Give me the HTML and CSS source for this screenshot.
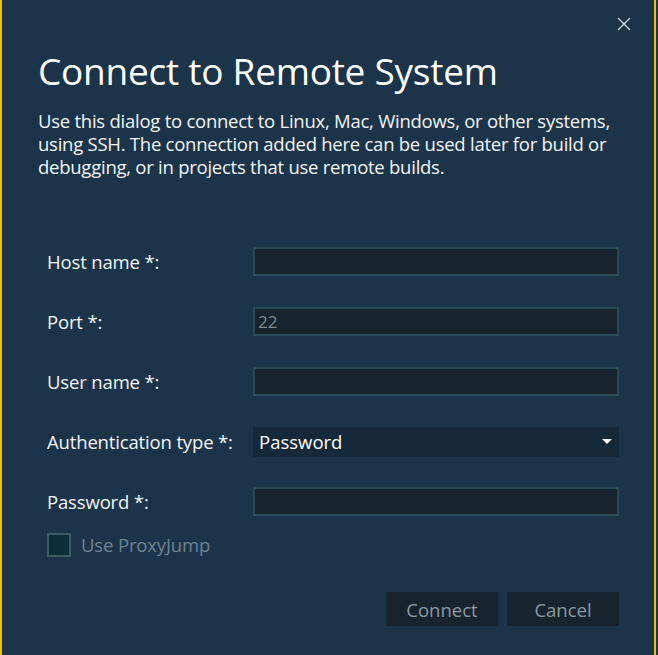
FILE: index.html
```html
<!DOCTYPE html>
<html>
<head>
<meta charset="utf-8">
<link rel="stylesheet" href="styles.css">
</head>
<body>
<div class="dialog">
  <div class="topbar">
    <button class="close" aria-label="Close">
      <svg width="14" height="14" viewBox="0 0 14 14"><path d="M1 1 L13 13 M13 1 L1 13" stroke="#d8dee3" stroke-width="1.3" fill="none"/></svg>
    </button>
  </div>
  <h1 class="title">Connect to Remote System</h1>
  <p class="desc">Use this dialog to connect to Linux, Mac, Windows, or other systems, using SSH. The connection added here can be used later for build or debugging, or in projects that use remote builds.</p>
  <div class="form">
    <label class="label">Host name *:</label>
    <div class="input"></div>
    <label class="label">Port *:</label>
    <div class="input"><span class="placeholder">22</span></div>
    <label class="label">User name *:</label>
    <div class="input"></div>
    <label class="label">Authentication type *:</label>
    <div class="select"><span>Password</span>
      <svg width="10" height="6" viewBox="0 0 10 6"><path d="M0 0 H10 L5 5 Z" fill="#ffffff"/></svg>
    </div>
    <label class="label">Password *:</label>
    <div class="input"></div>
  </div>
  <div class="check-row">
    <span class="checkbox"></span>
    <span class="check-label">Use ProxyJump</span>
  </div>
  <div class="buttons">
    <button class="btn">Connect</button>
    <button class="btn">Cancel</button>
  </div>
</div>
</body>
</html>
```

FILE: styles.css
```css
html, body {
  margin: 0;
  padding: 0;
  background: #1b3449;
}
.dialog {
  box-sizing: border-box;
  width: 656px;
  height: 655px;
  background: #1b3449;
  border-left: 2px solid #f5c000;
  border-right: 2px solid #f5c000;
  font-family: "Open Sans", "Noto Sans", sans-serif;
  color: #ffffff;
  padding: 0 0 0 36px;
  display: flex;
  flex-direction: column;
}
.topbar {
  display: flex;
  justify-content: flex-end;
  height: 47px;
  padding-right: 23px;
}
.close {
  background: none;
  border: none;
  padding: 0;
  margin-top: 17px;
  width: 14px;
  height: 14px;
  display: flex;
}
.title {
  margin: 0;
  font-weight: 400;
  font-size: 37px;
  line-height: 48px;
  letter-spacing: -0.25px;
}
.desc {
  margin: 14px 0 0 0;
  font-size: 18.5px;
  line-height: 23px;
  width: 592px;
  color: #f2f4f6;
  letter-spacing: -0.25px;
}
.form {
  display: grid;
  grid-template-columns: 206px 366px;
  grid-auto-rows: 29px;
  row-gap: 31px;
  margin: 69px 0 0 9px;
  align-items: center;
}
.label {
  font-size: 18.5px;
  color: #f2f4f6;
  letter-spacing: -0.15px;
}
.input {
  box-sizing: border-box;
  height: 29px;
  background: #17232d;
  border: 2px solid #2b4b57;
  display: flex;
  align-items: center;
  padding-left: 3px;
}
.placeholder {
  color: #7d8b93;
  font-size: 17px;
}
.select {
  box-sizing: border-box;
  height: 30px;
  background: #16293a;
  display: flex;
  align-items: center;
  justify-content: space-between;
  padding: 0 7px 0 6px;
  font-size: 18.5px;
  color: #ffffff;
}
.check-row {
  display: flex;
  align-items: center;
  gap: 10px;
  margin: 16px 0 0 9px;
}
.checkbox {
  box-sizing: border-box;
  width: 24px;
  height: 24px;
  background: #0e2d3a;
  border: 2px solid #3d5c66;
}
.check-label {
  font-size: 18.5px;
  color: #6d8290;
  letter-spacing: -0.15px;
}
.buttons {
  display: flex;
  justify-content: flex-end;
  gap: 9px;
  margin: 35px 35px 0 0;
}
.btn {
  width: 112px;
  height: 34px;
  background: #17232d;
  border: none;
  color: #8a9aa5;
  font-family: "Open Sans", "Noto Sans", sans-serif;
  font-size: 18.5px;
  padding: 0;
}
```
